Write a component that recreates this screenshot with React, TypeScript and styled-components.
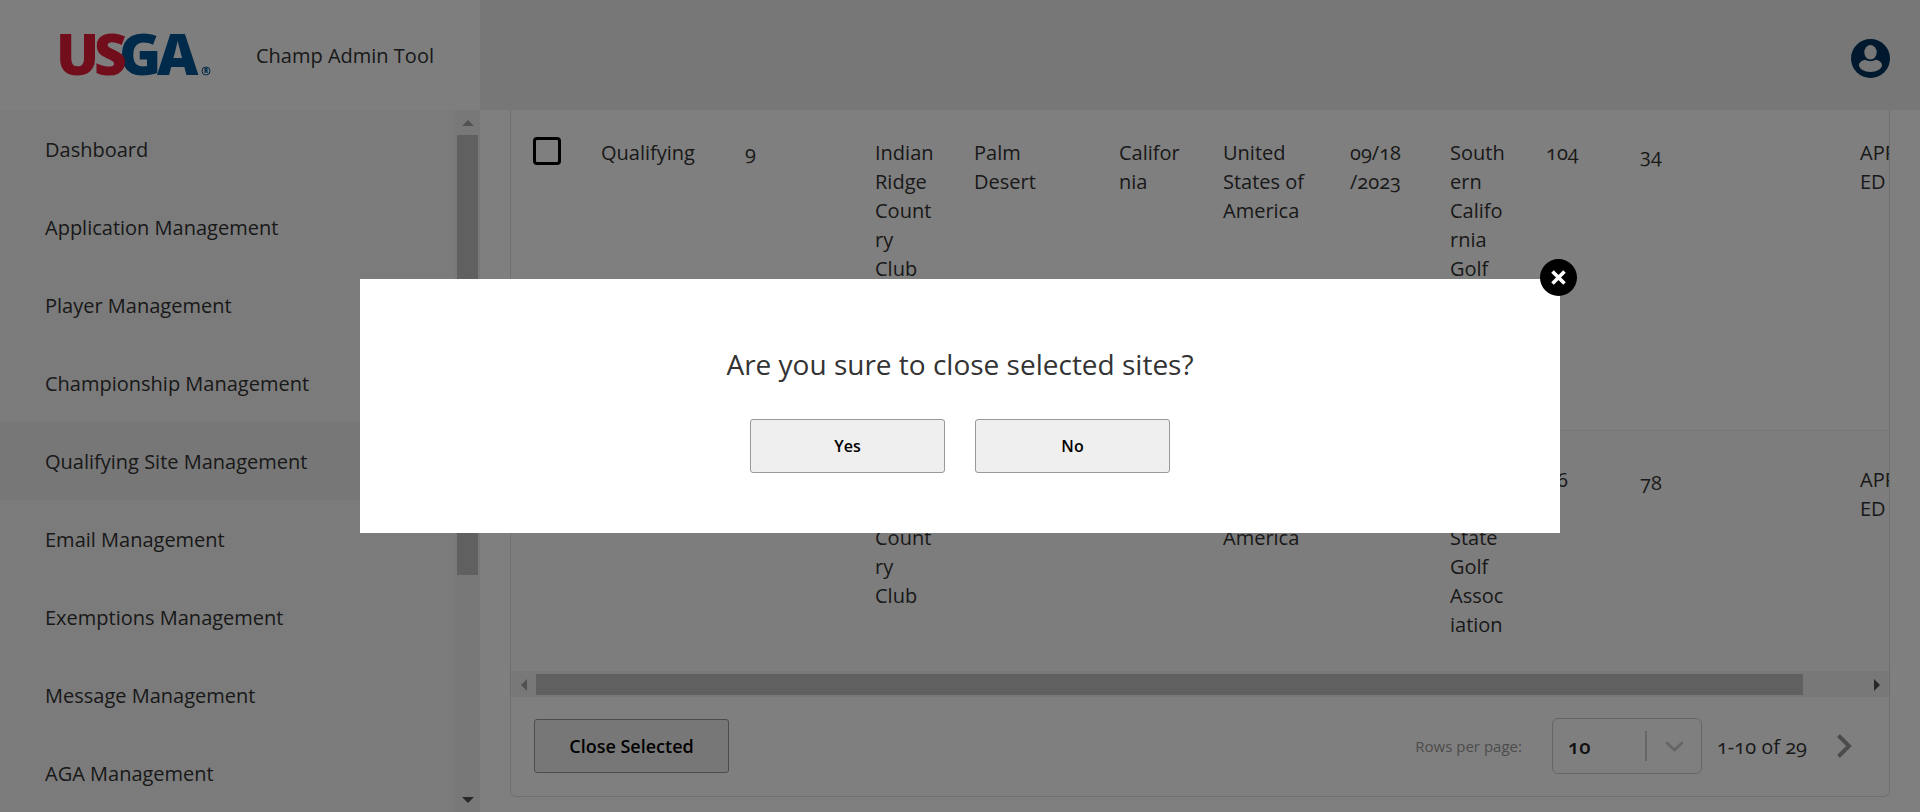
import React, { Fragment, useState } from "react";
import styled, { createGlobalStyle } from "styled-components";

const GlobalStyle = createGlobalStyle`
  *, *::before, *::after { box-sizing: border-box; }
  body {
    margin: 0;
    background: #fff;
    color: #333;
    font-family: "Open Sans", "Noto Sans", sans-serif;
    font-size: 20px;
    line-height: 29px;
    font-variant-numeric: oldstyle-nums;
  }
  button, input, select { font: inherit; font-variant-numeric: inherit; }
`;

const Page = styled.div`
  display: grid;
  grid-template-columns: 480px minmax(0, 1fr);
  grid-template-rows: 110px minmax(0, 1fr);
  height: 100vh;
  overflow: hidden;
`;

const Brand = styled.div`
  display: flex;
  align-items: center;
  gap: 45px;
  padding-left: 60px;
  background: #fdfdfd;
`;

const Logo = styled.svg`
  flex: none;
  width: 151px;
  height: 44px;
  overflow: visible;
  font-family: "Open Sans", sans-serif;
  font-size: 57px;
  font-weight: 800;
`;

const TopBar = styled.header`
  display: flex;
  justify-content: flex-end;
  align-items: flex-start;
  padding: 39px 30px 0;
  background: #eee;
`;

const AvatarButton = styled.button`
  display: block;
  width: 39px;
  height: 39px;
  padding: 0;
  border: 0;
  border-radius: 50%;
  background: none;
`;

const Sidebar = styled.aside`
  display: flex;
  min-height: 0;
  overflow: hidden;
  background: #f7f7f7;
`;

const Menu = styled.nav`
  flex: 1;
`;

const MenuLink = styled.a<{ $active?: boolean }>`
  display: flex;
  align-items: center;
  height: 78px;
  padding-left: 45px;
  background: ${(p) => (p.$active ? "#eee" : "transparent")};
  color: #333;
  text-decoration: none;
`;

const ScrollTrack = styled.div<{ $vertical?: boolean }>`
  display: flex;
  flex-direction: ${(p) => (p.$vertical ? "column" : "row")};
  flex: none;
  ${(p) => (p.$vertical ? "width: 25px; padding: 0 2px;" : "height: 26px; padding: 3px 0 2px;")}
  background: #f1f1f1;
`;

const ScrollArrow = styled.span<{ $vertical?: boolean; $muted?: boolean }>`
  display: grid;
  place-items: center;
  flex: none;
  ${(p) => (p.$vertical ? "height: 25px;" : "width: 25px;")}
  color: ${(p) => (p.$muted ? "#a3a3a3" : "#505050")};

  svg { display: block; }
`;

const ScrollLane = styled.div<{ $vertical?: boolean }>`
  display: flex;
  flex-direction: ${(p) => (p.$vertical ? "column" : "row")};
  flex: 1;
`;

const ScrollThumb = styled.div<{ $share: number }>`
  flex: 0 0 ${(p) => p.$share}%;
  background: #c1c1c1;
`;

const Main = styled.main`
  min-width: 0;
  padding: 0 30px;
`;

const Card = styled.section`
  overflow: hidden;
  border: 1px solid #e0e0e0;
  border-top: 0;
  border-radius: 0 0 6px 6px;
  background: #fff;
`;

const TableView = styled.div`
  overflow: hidden;
`;

const SitesTable = styled.table`
  width: 1469px;
  margin-top: -6px;
  table-layout: fixed;
  border-collapse: collapse;
`;

const Row = styled.tr<{ $tall?: boolean }>`
  height: ${(p) => (p.$tall ? 326 : 241)}px;
  background: ${(p) => (p.$tall ? "#fff" : "#fbfbfb")};

  & + & { border-top: 1px solid #eee; }
`;

const Cell = styled.td<{ $lowered?: boolean }>`
  padding: ${(p) => (p.$lowered ? 37 : 34)}px 0 0 20px;
  vertical-align: top;
  white-space: nowrap;
`;

const CheckCell = styled.td`
  padding: 33px 0 0 22px;
  vertical-align: top;
`;

const Checkbox = styled.input`
  display: block;
  width: 28px;
  height: 28px;
  margin: 0;
  appearance: none;
  border: 3px solid #000;
  border-radius: 4px;
`;

const CardFooter = styled.footer`
  display: flex;
  align-items: center;
  justify-content: space-between;
  padding: 21px 37px 22px 23px;
`;

const ActionButton = styled.button<{ $strong?: boolean }>`
  width: 195px;
  height: 54px;
  padding: 0;
  border: 1px solid #999;
  border-radius: 3px;
  background: #efefef;
  color: #000;
  font-size: ${(p) => (p.$strong ? 18 : 16)}px;
  font-weight: 600;
`;

const Pager = styled.div`
  display: flex;
  align-items: center;
`;

const PagerLabel = styled.label`
  margin-right: 30px;
  color: #999;
  font-size: 15px;
`;

const SelectBox = styled.div`
  position: relative;
  width: 150px;
  height: 56px;
  margin-right: 15px;
`;

const PageSize = styled.select`
  width: 100%;
  height: 100%;
  padding: 0 15px;
  appearance: none;
  border: 1px solid #ccc;
  border-radius: 6px;
  background: #fff;
  color: #222;
  font-weight: 600;
`;

const SelectMark = styled.svg`
  position: absolute;
  top: 13px;
  right: 16px;
  pointer-events: none;
`;

const NextButton = styled.button`
  display: block;
  margin-left: 30px;
  padding: 0;
  border: 0;
  background: none;

  svg { display: block; }
`;

const Overlay = styled.div`
  position: fixed;
  inset: 0;
  display: grid;
  place-items: center;
  background: rgba(0, 0, 0, 0.5);
`;

const Dialog = styled.div`
  position: relative;
  width: 62.5%;
  padding: 60px 30px;
  background: #fff;
  text-align: center;
`;

const DialogTitle = styled.h2`
  margin: 0 0 30px;
  font-size: 28px;
  font-weight: 400;
  line-height: 50px;
`;

const DialogActions = styled.div`
  display: flex;
  justify-content: center;
  gap: 30px;
`;

const CloseButton = styled.button`
  position: absolute;
  top: -20px;
  right: -17px;
  display: grid;
  place-items: center;
  width: 37px;
  height: 37px;
  padding: 0;
  border: 0;
  border-radius: 50%;
  background: #000;
`;

const menuItems = [
  "Dashboard",
  "Application Management",
  "Player Management",
  "Championship Management",
  "Qualifying Site Management",
  "Email Management",
  "Exemptions Management",
  "Message Management",
  "AGA Management",
];

const columnWidths = [70, 144, 130, 99, 145, 104, 127, 100, 96, 94, 220, 140];

const sites: string[][][] = [
  [
    ["Qualifying"],
    ["9"],
    ["Indian", "Ridge", "Count", "ry", "Club"],
    ["Palm", "Desert"],
    ["Califor", "nia"],
    ["United", "States of", "America"],
    ["09/18", "/2023"],
    ["South", "ern", "Califo", "rnia", "Golf", "Assoc", "iation"],
    ["104"],
    ["34"],
    ["APPROV", "ED"],
  ],
  [
    ["Qualifying"],
    ["10"],
    ["Spring", "Lake", "Count", "ry", "Club"],
    ["Spring", "Lake"],
    ["New", "Jersey"],
    ["United", "States of", "America"],
    ["09/18", "/2023"],
    ["New", "Jersey", "State", "Golf", "Assoc", "iation"],
    ["96"],
    ["78"],
    ["APPROV", "ED"],
  ],
];

const arrowPoints = {
  up: "0,6 6,0 12,6",
  down: "0,0 12,0 6,6",
  left: "6,0 6,12 0,6",
  right: "0,0 6,6 0,12",
};

function Arrow({ to, muted }: { to: keyof typeof arrowPoints; muted?: boolean }) {
  const vertical = to === "up" || to === "down";
  return (
    <ScrollArrow $vertical={vertical} $muted={muted}>
      <svg width={vertical ? 12 : 6} height={vertical ? 6 : 12} fill="currentColor">
        <polygon points={arrowPoints[to]} />
      </svg>
    </ScrollArrow>
  );
}

function ConfirmDialog({ onClose }: { onClose: () => void }) {
  return (
    <Overlay>
      <Dialog role="dialog" aria-modal="true" aria-labelledby="confirm-title">
        <CloseButton type="button" aria-label="Close" onClick={onClose}>
          <svg width="15" height="15" viewBox="0 0 15 15">
            <path d="M1.5 1.5L13.5 13.5M13.5 1.5L1.5 13.5" stroke="#fff" strokeWidth="3.6" />
          </svg>
        </CloseButton>
        <DialogTitle id="confirm-title">Are you sure to close selected sites?</DialogTitle>
        <DialogActions>
          <ActionButton type="button" onClick={onClose}>Yes</ActionButton>
          <ActionButton type="button" onClick={onClose}>No</ActionButton>
        </DialogActions>
      </Dialog>
    </Overlay>
  );
}

export default function App() {
  const [confirming, setConfirming] = useState(true);

  return (
    <>
      <GlobalStyle />
      <Page>
        <Brand>
          <Logo viewBox="0 0 151 44" role="img" aria-label="USGA">
            <g fill="#005592">
              <text x="59" y="42">G</text>
              <text x="97" y="42">A</text>
              <circle cx="146" cy="38" r="4" fill="none" stroke="#005592" />
              <text x="144" y="40" fontSize="6">R</text>
            </g>
            <g fill="#e41a38">
              <text x="-4" y="42">U</text>
              <text x="34" y="42">S</text>
            </g>
          </Logo>
          <span>Champ Admin Tool</span>
        </Brand>
        <TopBar>
          <AvatarButton type="button" aria-label="Account">
            <svg width="39" height="39" viewBox="0 0 39 39">
              <circle cx="19.5" cy="19.5" r="19.5" fill="#00325e" />
              <path
                d="M14.5 20.8C10.500 21.300 8 23.800 8 26.300C8 30 13.500 33 19.500 33C25.500 33 31 30 31 26.300C31 23.800 28.500 21.300 24.500 20.800C23 21.800 21.500 22.200 19.500 22.200C17.500 22.200 16 21.800 14.500 20.800Z"
                fill="#eee"
              />
              <ellipse cx="19.5" cy="13.3" rx="6.8" ry="8.1" fill="#00325e" />
              <ellipse cx="19.5" cy="13.3" rx="6.2" ry="7.3" fill="#eee" />
            </svg>
          </AvatarButton>
        </TopBar>

        <Sidebar>
          <Menu>
            {menuItems.map((item) => (
              <MenuLink key={item} href="#" $active={item === "Qualifying Site Management"}>
                {item}
              </MenuLink>
            ))}
          </Menu>
          <ScrollTrack $vertical>
            <Arrow to="up" muted />
            <ScrollLane $vertical>
              <ScrollThumb $share={67.5} />
            </ScrollLane>
            <Arrow to="down" />
          </ScrollTrack>
        </Sidebar>

        <Main>
          <Card>
            <TableView>
              <SitesTable>
                <colgroup>
                  {columnWidths.map((width, i) => (
                    <col key={i} width={width} />
                  ))}
                </colgroup>
                <tbody>
                  {sites.map((site, r) => (
                    <Row key={r} $tall={r === 0}>
                      <CheckCell>
                        <Checkbox type="checkbox" aria-label={`Select ${site[2].join(" ")}`} />
                      </CheckCell>
                      {site.map((lines, c) => (
                        <Cell key={c} $lowered={c === 9}>
                          {lines.map((line, i) => (
                            <Fragment key={i}>
                              {i > 0 && <br />}
                              {line}
                            </Fragment>
                          ))}
                        </Cell>
                      ))}
                    </Row>
                  ))}
                </tbody>
              </SitesTable>
            </TableView>
            <ScrollTrack>
              <Arrow to="left" muted />
              <ScrollLane>
                <ScrollThumb $share={95.4} />
              </ScrollLane>
              <Arrow to="right" />
            </ScrollTrack>
            <CardFooter>
              <ActionButton type="button" $strong onClick={() => setConfirming(true)}>
                Close Selected
              </ActionButton>
              <Pager>
                <PagerLabel htmlFor="page-size">Rows per page:</PagerLabel>
                <SelectBox>
                  <PageSize id="page-size" defaultValue="10">
                    <option>10</option>
                    <option>25</option>
                    <option>50</option>
                  </PageSize>
                  <SelectMark width="42" height="30" viewBox="0 0 42 30" fill="none" stroke="#ccc">
                    <path d="M2 0V30" strokeWidth="2" />
                    <path d="M23 12L30.5 19L38 12" strokeWidth="3" strokeLinecap="round" />
                  </SelectMark>
                </SelectBox>
                <span>1-10 of 29</span>
                <NextButton type="button" aria-label="Next page">
                  <svg width="15" height="24" viewBox="0 0 15 24" fill="none">
                    <path d="M1.5 1.5L12 12L1.5 22.5" stroke="#999" strokeWidth="4" />
                  </svg>
                </NextButton>
              </Pager>
            </CardFooter>
          </Card>
        </Main>
      </Page>
      {confirming && <ConfirmDialog onClose={() => setConfirming(false)} />}
    </>
  );
}
